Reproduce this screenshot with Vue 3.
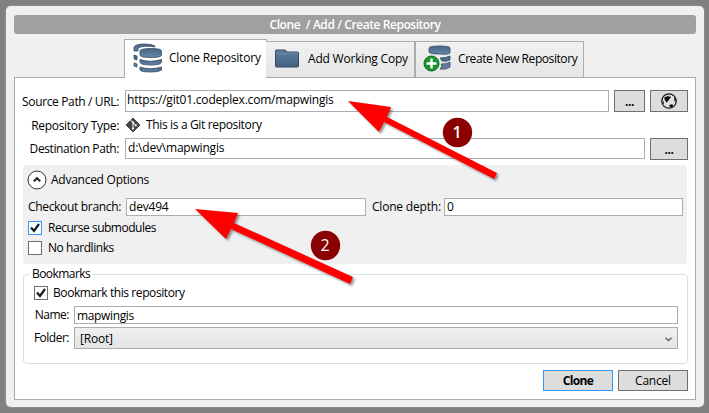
<script setup>
import { ref } from 'vue'
const source = ref('https://git01.codeplex.com/mapwingis')
const destination = ref('d:\\dev\\mapwingis')
const branch = ref('dev494')
const depth = ref('0')
const name = ref('mapwingis')
const recurse = ref(true)
const hardlinks = ref(false)
const bookmark = ref(true)
</script>

<template>
  <div class="screen">
    <svg class="defs" width="0" height="0">
      <defs>
        <linearGradient id="steel" x1="0" y1="0" x2="0" y2="1">
          <stop offset="0" stop-color="#456487" />
          <stop offset="1" stop-color="#6886a8" />
        </linearGradient>
        <linearGradient id="folder" x1="0" y1="0" x2="0" y2="1">
          <stop offset="0" stop-color="#5f7fa2" />
          <stop offset="1" stop-color="#436080" />
        </linearGradient>
      </defs>
    </svg>
    <main class="dialog">
      <header class="title">Clone&nbsp; / Add / Create Repository</header>
      <nav class="tabs">
        <button class="tab active">
          <svg class="db" width="30" height="30" viewBox="0 0 30 30">
            <g fill="url(#steel)" stroke="#344c66" stroke-width=".8">
              <path d="M1 4Q3 1 11 1Q19 1 22 3V4Q10 2 5 5V8H1Z" />
              <path d="M1 12L4 13V17L1 16ZM1 20L4 21V24L1 23Z" />
              <path d="M7 8Q7 5.5 18 5.5Q28.5 5.5 28.5 8V12Q28.5 14.5 18 14.5Q7 14.5 7 12Z" />
              <path d="M7 16.5Q17 20 28.5 16.5V19.5Q27 22 18 22Q7 22 7 19Z" />
              <path d="M7 24Q17 27.5 28.5 24V27Q26 29 18 29Q8 29 7 27Z" />
            </g>
          </svg>
          <span>Clone Repository</span>
        </button>
        <button class="tab working">
          <svg class="folder" width="26" height="20" viewBox="0 0 26 20">
            <path d="M1.5 2Q1.5 1 2.5 1H10.5Q12.5 1 12.5 3H23.5Q24.5 3 24.5 4V17Q24.5 18 23.5 18H2.5Q1.5 18 1.5 17Z" fill="url(#folder)" stroke="#344c66" />
            <path d="M2.5 5H11.5L13.5 4H23.5" fill="none" stroke="#7894b0" stroke-width=".7" />
          </svg>
          <span>Add Working Copy</span>
        </button>
        <button class="tab create">
          <svg class="dbnew" width="30" height="28" viewBox="0 0 30 28">
            <g fill="url(#steel)" stroke="#344c66" stroke-width=".8">
              <path d="M6 3Q6 1 17 1Q27 1 27 3V8Q25 10 17 9Q6 9 6 7Z" />
              <path d="M17 13Q23 13 27 11V15Q23 17 19 16ZM18 19Q24 19 27 17V22Q23 25 17 24L19 21Z" />
            </g>
            <circle cx="8.5" cy="18.5" r="7.5" fill="#18952e" stroke="#0b6c1c" />
            <path d="M8.5 13.5V23.5M3.5 18.5H13.5" stroke="#fff" stroke-width="2.4" />
          </svg>
          <span>Create New Repository</span>
        </button>
      </nav>
      <section class="panel">
        <div class="row source">
          <label class="s-source">Source Path / URL:</label>
          <input v-model="source" class="field f-source" />
          <button class="btn dots small">...</button>
          <button class="btn globe">
            <svg width="16" height="16" viewBox="0 0 16 16">
              <circle cx="8" cy="8" r="7.2" fill="#e2e2e2" stroke="#111" stroke-width="1.2" />
              <path d="M3.5 4L6 3.5L7.5 2.5L8 3.8L10 3.5L9.5 5L8 6.5L6.8 8.5L5.5 9.5L4.5 8L3.5 6.5ZM1.5 7L3 9.5L3 11.5L2 10ZM13 4L14.5 6V9L13.5 8ZM8 12.2L10.5 11.3L12.5 12L11 14L9 14Z" fill="#111" />
            </svg>
          </button>
        </div>
        <div class="row type">
          <label class="s-type">Repository Type:</label>
          <svg class="git" width="16" height="16" viewBox="0 0 16 16">
            <path d="M8 1L15 8L8 15L1 8Z" fill="#484848" stroke="#484848" stroke-linejoin="round" />
            <path d="M5.5 3L8 5.5V11.5M8 5.5L10.5 8" fill="none" stroke="#fff" />
            <circle cx="8" cy="5.5" r="1.1" fill="#fff" /><circle cx="10.8" cy="8.3" r="1.1" fill="#fff" /><circle cx="8" cy="11.5" r="1.1" fill="#fff" />
          </svg>
          <span class="s-git">This is a Git repository</span>
        </div>
        <div class="row dest">
          <label class="s-dest">Destination Path:</label>
          <input v-model="destination" class="field f-dest" />
          <button class="btn dots">...</button>
        </div>
        <div class="advanced">
          <div class="adv-head">
            <svg width="20" height="20" viewBox="0 0 20 20">
              <circle cx="10" cy="10" r="9" fill="#fff" stroke="#333" />
              <path d="M6.8 11.3L10 8.2L13.2 11.3" fill="none" stroke="#222" stroke-width="2" />
            </svg>
            <span class="s-adv">Advanced Options</span>
          </div>
          <div class="adv-fields">
            <label class="s-check">Checkout branch:</label>
            <input v-model="branch" class="field f-branch" />
            <label class="depth">Clone depth:</label>
            <input v-model="depth" class="field f-depth" />
          </div>
          <label class="option first">
            <span class="box focus"><svg v-if="recurse" viewBox="0 0 12 12"><path d="M2 5.5L5 9L10 2" /></svg></span>
            <span class="s-recurse">Recurse submodules</span>
          </label>
          <label class="option">
            <span class="box"><svg v-if="hardlinks" viewBox="0 0 12 12"><path d="M2 5.5L5 9L10 2" /></svg></span>
            <span class="s-hard">No hardlinks</span>
          </label>
        </div>
        <fieldset class="bookmarks">
          <legend>Bookmarks</legend>
          <label class="option">
            <span class="box"><svg v-if="bookmark" viewBox="0 0 12 12"><path d="M2 5.5L5 9L10 2" /></svg></span>
            <span class="s-bookmark">Bookmark this repository</span>
          </label>
          <div class="book-row name"><label>Name:</label><input v-model="name" class="field f-name" /></div>
          <div class="book-row">
            <label>Folder:</label>
            <div class="select"><span>[Root]</span>
              <svg width="7" height="5" viewBox="0 0 7 5"><path d="M.5 .7L3.5 3.7L6.5 .7" fill="none" stroke="#555" stroke-width="1.3" /></svg>
            </div>
          </div>
        </fieldset>
        <footer class="actions">
          <button class="btn primary">Clone</button>
          <button class="btn cancel">Cancel</button>
        </footer>
      </section>
    </main>
    <svg class="notes" width="709" height="413" viewBox="0 0 709 413">
      <g class="arrows" fill="#f00">
        <path d="M348 101L391 107L387 117L497 173L494 179L384 122L379 132Z" />
        <path d="M195 209L238 213L234 223L353 277L350 284L231 229L226 239Z" />
      </g>
      <circle cx="457.5" cy="132.5" r="14.7" fill="#8b0000" />
      <circle cx="325.5" cy="245.5" r="14.7" fill="#8b0000" />
      <text class="num one" x="457" y="138">1</text>
      <text class="num" x="325" y="251">2</text>
    </svg>
  </div>
</template>

<style>
body { margin: 0; overflow: hidden; }
</style>
<style scoped>
* { box-sizing: border-box; }
.screen { width: 709px; height: 413px; padding: 6px 5px 6px 6px; background: #808080; font: 12px/16px "Open Sans", "Noto Sans", sans-serif; letter-spacing: -.2px; color: #000; overflow: hidden; position: relative; }
.defs { position: absolute; }
.dialog { width: 698px; height: 401px; padding: 9px 7px 8px 8px; border-radius: 5px; background: #f0f0f0; box-shadow: 0 0 2px #b0b0b0; }
.title { width: 682px; height: 19px; border-radius: 3px; background: #a0a0a0; color: #fff; text-align: center; font-weight: 600; line-height: 19px; letter-spacing: -.46px; word-spacing: .2px; }
button, input { font: inherit; letter-spacing: inherit; color: inherit; }
.tabs { height: 43px; padding: 5px 0 0 110px; display: flex; align-items: flex-end; }
.tab { height: 37px; padding: 0; border: 1px solid #acacac; background: linear-gradient(#f1f1f1, #e5e5e5); display: flex; align-items: center; white-space: nowrap; margin-bottom: -1px; position: relative; }
.tab.active { width: 143px; height: 39px; padding: 0 0 3px 8px; background: #fff; border-bottom: 0; }
.active span { margin-left: 6px; }
.working { width: 149px; padding: 0 0 2px 8px; border-left: 0; margin-left: -1px; }
.working span { margin-left: 8px; }
.create { width: 169px; padding: 0 0 2px 7px; }
.create span { margin-left: 5px; letter-spacing: -.42px; }
.tab svg { flex: none; }
.panel { width: 682px; height: 323px; padding: 12px 7px 0 8px; background: #fff; border: 1px solid #acacac; }
.row { display: flex; align-items: center; }
.row > label { width: 96px; margin-right: 6px; display: flex; justify-content: flex-end; white-space: nowrap; }
.row > .s-source { padding-top: 2px; letter-spacing: -.36px; }
.source { height: 22px; }
.type { height: 26px; }
.s-type { padding-top: 2px; letter-spacing: -.2px; }
.row > .s-type { letter-spacing: -.32px; }
.dest { height: 21px; }
.s-dest { padding-top: 1px; letter-spacing: -.4px; }
.s-git { letter-spacing: -.35px; }
.field { height: 18px; min-width: 0; margin: 0; padding: 0 0 0 2px; border: 1px solid #abadb3; border-radius: 0; background: #fff; outline: 0; }
.f-source { width: 484px; height: 22px; padding: 0 0 3px 1px; }
.f-dest { width: 520px; height: 21px; padding-bottom: 2px; }
.btn { width: 38px; height: 22px; padding: 0; border: 1px solid #707070; background: #ddd; display: flex; align-items: center; justify-content: center; margin-left: 5px; }
.small { width: 31px; }
.dots { font-weight: 700; letter-spacing: -.5px; padding-top: 2px; }
.git { margin-right: 5px; }
.advanced { width: 664px; height: 99px; margin-top: 6px; padding: 5px 4px 0; border-radius: 3px; background: #f0f0f0; }
.adv-head { height: 20px; display: flex; align-items: center; gap: 4px; }
.s-adv { letter-spacing: -.26px; }
.adv-fields { height: 18px; margin-top: 8px; display: flex; align-items: center; padding-left: 1px; white-space: nowrap; }
.adv-fields > label { width: 98px; }
.adv-fields > .s-check { letter-spacing: -.32px; }
.f-branch { width: 240px; padding-bottom: 1px; }
.adv-fields .depth { width: 78px; padding-left: 6px; }
.f-depth { width: 239px; padding-bottom: 1px; }
.option { height: 20px; display: flex; align-items: center; gap: 6px; padding-left: 1px; }
.option.first { margin-top: 2px; }
.s-recurse { letter-spacing: -.48px; }
.s-hard { letter-spacing: -.44px; }
.s-bookmark { letter-spacing: -.41px; }
.box { width: 14px; height: 14px; border: 1px solid #707070; background: #fff; display: flex; }
.box.focus { border-color: #3399ff; }
.box svg { width: 12px; height: 12px; }
.box path { fill: none; stroke: #1a1a1a; stroke-width: 2.2; }
.bookmarks { width: 665px; height: 98px; margin: 2px 0 0; padding: 1px 9px 0 10px; border: 1px solid #d5dfe5; border-radius: 4px; }
.bookmarks legend { height: 16px; margin-left: -5px; padding: 0 3px; letter-spacing: -.55px; }
.bookmarks .option { height: 20px; gap: 5px; padding: 0; margin-top: 0; }
.book-row { display: flex; align-items: center; height: 22px; }
.book-row label { width: 35px; margin-right: 5px; display: flex; justify-content: flex-end; letter-spacing: -.5px; }
.book-row.name { height: 18px; margin: 3px 0 3px; }
.f-name { width: 604px; letter-spacing: -.35px; }
.select { width: 604px; height: 22px; padding: 2px 5px 0; border: 1px solid #acacac; background: linear-gradient(#f0f0f0, #e4e4e4); display: flex; align-items: center; justify-content: space-between; }
.actions { margin-top: 6px; display: flex; justify-content: flex-end; }
.actions .btn { width: 70px; height: 21px; }
.primary { border-color: #39f; font-weight: 700; letter-spacing: -.6px; }
.notes { position: absolute; left: 0; top: 0; pointer-events: none; }
.arrows { filter: drop-shadow(2px 2px 1px rgba(0, 0, 0, .4)); }
.num { fill: #fff; font: 16px "Open Sans", sans-serif; text-anchor: middle; }
.num.one { font-weight: 600; }
</style>
